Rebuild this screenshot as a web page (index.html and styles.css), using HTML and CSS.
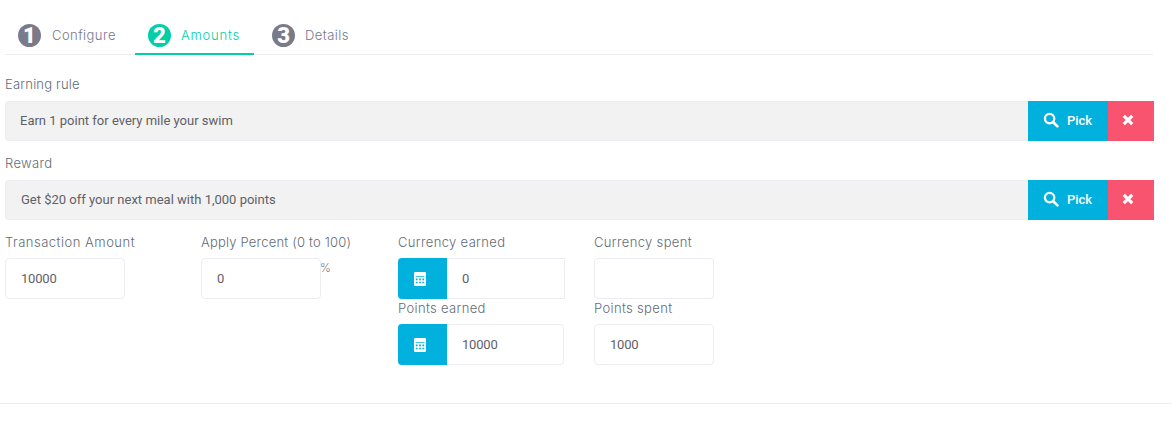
FILE: index.html
```html
<!DOCTYPE html>
<html lang="en">
<head>
<meta charset="utf-8">
<title>Amounts</title>
<link rel="stylesheet" href="styles.css">
</head>
<body>
<div class="page">
  <nav class="tabs">
    <a class="tab"><span class="num">1</span><span class="tab-label">Configure</span></a>
    <a class="tab active"><span class="num">2</span><span class="tab-label">Amounts</span></a>
    <a class="tab"><span class="num">3</span><span class="tab-label">Details</span></a>
  </nav>

  <div class="field pick-field first">
    <div class="label tight">Earning rule</div>
    <div class="pick-row">
      <div class="pick-value">Earn 1 point for every mile your swim</div>
      <button class="btn-pick"><svg class="ico-search" viewBox="0 0 16 16"><circle cx="6.6" cy="6.6" r="4.7" fill="none" stroke="#fff" stroke-width="2.3"/><path d="M10.2 10.2L14.4 14.4" stroke="#fff" stroke-width="2.7" stroke-linecap="round"/></svg>Pick</button>
      <button class="btn-clear"><svg class="ico-x" viewBox="0 0 12 12"><path d="M1.8 1.800L10.200 10.200M10.200 1.800L1.800 10.200" stroke="#fff" stroke-width="3.2"/></svg></button>
    </div>
  </div>

  <div class="field pick-field second">
    <div class="label">Reward</div>
    <div class="pick-row">
      <div class="pick-value alt">Get $20 off your next meal with 1,000 points</div>
      <button class="btn-pick"><svg class="ico-search" viewBox="0 0 16 16"><circle cx="6.6" cy="6.6" r="4.7" fill="none" stroke="#fff" stroke-width="2.3"/><path d="M10.2 10.2L14.4 14.4" stroke="#fff" stroke-width="2.7" stroke-linecap="round"/></svg>Pick</button>
      <button class="btn-clear"><svg class="ico-x" viewBox="0 0 12 12"><path d="M1.8 1.800L10.200 10.200M10.200 1.800L1.800 10.200" stroke="#fff" stroke-width="3.2"/></svg></button>
    </div>
  </div>

  <div class="amounts">
    <div class="col col-a">
      <div class="label wide">Transaction Amount</div>
      <div class="box">10000</div>
    </div>
    <div class="col col-b">
      <div class="label tight">Apply Percent (0 to 100)</div>
      <div class="percent-row"><div class="box">0</div><span class="pct">%</span></div>
    </div>
    <div class="col col-c">
      <div class="label">Currency earned</div>
      <div class="group wide-group">
        <span class="addon"><svg class="ico-calc" viewBox="0 0 12 14"><path fill="#fff" fill-rule="evenodd" d="M1.2 0h9.6A1.2 1.2 0 0 1 12 1.2v11.6a1.2 1.2 0 0 1-1.2 1.2H1.2A1.2 1.2 0 0 1 0 12.800V1.200A1.200 1.200 0 0 1 1.200 0zM1.600 4.300v0.800h8.800v-0.800zM1.800 6.600v1.600h1.800V6.600zM5.100 6.600v1.600h1.800V6.600zM8.400 6.600v1.600h1.800V6.600zM1.800 9.700v1.600h1.800V9.700zM5.100 9.700v1.600h1.800V9.700zM8.400 9.700v1.600h1.800V9.700z"/></svg></span>
        <div class="group-value">0</div>
      </div>
      <div class="label second-label">Points earned</div>
      <div class="group">
        <span class="addon"><svg class="ico-calc" viewBox="0 0 12 14"><path fill="#fff" fill-rule="evenodd" d="M1.2 0h9.6A1.2 1.2 0 0 1 12 1.2v11.6a1.2 1.2 0 0 1-1.2 1.2H1.2A1.2 1.2 0 0 1 0 12.800V1.200A1.200 1.200 0 0 1 1.200 0zM1.600 4.300v0.800h8.800v-0.800zM1.800 6.600v1.600h1.800V6.600zM5.100 6.600v1.600h1.800V6.600zM8.400 6.600v1.600h1.800V6.600zM1.800 9.700v1.600h1.800V9.700zM5.100 9.700v1.600h1.800V9.700zM8.400 9.700v1.600h1.800V9.700z"/></svg></span>
        <div class="group-value">10000</div>
      </div>
    </div>
    <div class="col col-d">
      <div class="label">Currency spent</div>
      <div class="box"></div>
      <div class="label second-label">Points spent</div>
      <div class="box">1000</div>
    </div>
  </div>

  <hr class="footer-line">
</div>
</body>
</html>
```

FILE: styles.css
```css
* { box-sizing: border-box; }

html, body {
  margin: 0;
  background: #fff;
}

body {
  font-family: "Inter", "Liberation Sans", sans-serif;
  overflow: hidden;
}

.page {
  width: 1172px;
  height: 427px;
  padding-top: 18px;
}

.tabs {
  display: flex;
  gap: 5px;
  margin: 0 19px 0 5px;
  height: 37px;
  border-bottom: 1px solid #ebedf2;
}

.tab {
  display: flex;
  align-items: center;
  gap: 11px;
  height: 37px;
  padding: 0 14px 1px 13px;
  border-bottom: 2px solid transparent;
  color: #74788d;
  font-size: 13px;
  font-weight: 300;
  letter-spacing: 0.45px;
}

.tab:last-child { gap: 10px; }

.tab.active {
  gap: 10px;
  color: #00cfa8;
  border-bottom-color: #00cfa8;
  letter-spacing: 0.8px;
}

.num {
  display: flex;
  align-items: center;
  justify-content: center;
  width: 23px;
  height: 23px;
  border-radius: 50%;
  background: #7a7b8a;
  color: #fff;
  font-family: "Roboto", sans-serif;
  font-size: 22px;
  font-weight: 900;
  letter-spacing: 0;
}

.active .num {
  background: #00cfa8;
}

.label {
  height: 20px;
  color: #646c75;
  font-size: 13px;
  font-weight: 300;
  line-height: 20px;
  letter-spacing: 0.35px;
}

.label.tight { letter-spacing: 0.2px; }
.label.wide { letter-spacing: 0.5px; }

.field {
  margin-left: 5px;
  margin-right: 18px;
}

.pick-field.first { margin-top: 19px; }
.pick-field.second { margin-top: 12px; }

.pick-field .label { margin-bottom: 7px; }

.pick-row {
  display: flex;
  height: 40px;
}

.pick-value {
  flex: 1;
  display: flex;
  align-items: center;
  padding: 0 0 2px 14px;
  background: #f2f2f2;
  border: 1px solid #ebedf2;
  border-right: 0;
  border-radius: 4px 0 0 4px;
  color: #5f6068;
  font-family: "Roboto", sans-serif;
  font-size: 13px;
}

.pick-value.alt { padding-left: 15px; }

.btn-pick, .btn-clear {
  display: flex;
  align-items: center;
  justify-content: center;
  border: 0;
  padding: 0 0 2px;
  color: #fff;
  font-family: "Roboto", sans-serif;
  font-size: 13px;
  font-weight: 500;
}

.btn-pick {
  width: 80px;
  gap: 8px;
  padding-right: 1px;
  background: #00b1de;
}

.btn-clear {
  width: 46px;
  background: #f85470;
  padding-right: 6px;
}

.ico-search { width: 16px; height: 16px; }
.ico-x { width: 12px; height: 12px; }
.ico-calc { width: 12px; height: 14px; }

.amounts {
  display: flex;
  margin: 12px 0 0 5px;
  height: 171px;
}

.col { display: flex; flex-direction: column; }
.col-a { width: 196px; }
.col-b { width: 197px; }
.col-c { width: 196px; }
.col-d { width: 130px; }

.amounts .label { margin-bottom: 6px; }
.amounts .second-label { margin-top: -1px; margin-bottom: 6px; }

.box {
  width: 120px;
  height: 41px;
  display: flex;
  align-items: center;
  padding-left: 15px;
  border: 1px solid #ebedf2;
  border-radius: 4px;
  color: #5f6068;
  font-family: "Roboto", sans-serif;
  font-size: 13px;
  letter-spacing: -0.2px;
}

.percent-row { display: flex; }

.pct {
  margin-left: -1px;
  color: #777980;
  font-size: 11.500px;
  font-weight: 300;
  line-height: 20px;
}

.group {
  display: flex;
  width: 166px;
  height: 41px;
  border: 1px solid #ebedf2;
  border-left: 0;
  border-radius: 0 4px 4px 0;
}

.group.wide-group { width: 167px; border-radius: 0; }

.addon {
  display: flex;
  align-items: center;
  width: 49px;
  height: 41px;
  margin-top: -1px;
  margin-bottom: -1px;
  padding-left: 16px;
  background: #00b1de;
  border-radius: 4px 0 0 4px;
}

.group-value {
  display: flex;
  align-items: center;
  padding-left: 15px;
  color: #5f6068;
  font-family: "Roboto", sans-serif;
  font-size: 13px;
  letter-spacing: -0.2px;
}

.footer-line {
  margin: 0;
  border: 0;
  border-top: 1px solid #ebedf2;
}
```
